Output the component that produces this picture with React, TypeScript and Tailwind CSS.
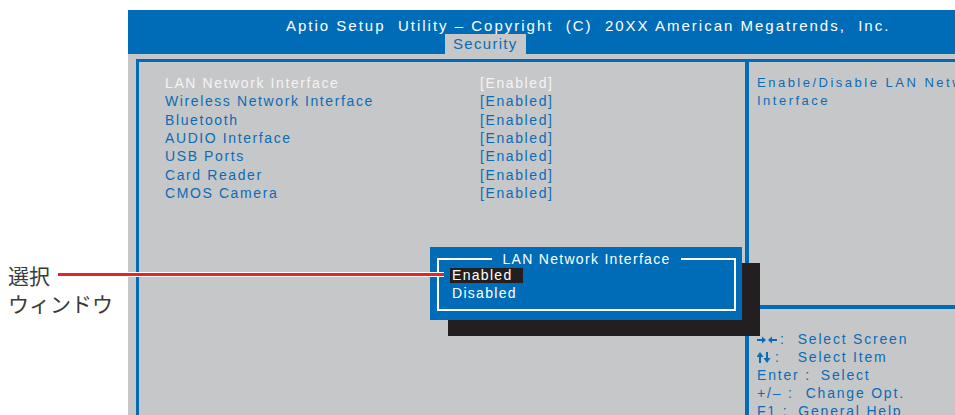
const BLUE = "bg-[#006cb7]";

const items = [
  "LAN Network Interface",
  "Wireless Network Interface",
  "Bluetooth",
  "AUDIO Interface",
  "USB Ports",
  "Card Reader",
  "CMOS Camera",
];

function LeftRight() {
  return (
    <svg width="20" height="8" viewBox="0 0 20 8" className="fill-current">
      <rect x="0" y="3" width="6" height="2" />
      <polygon points="5,0.5 9,4 5,7.5" />
      <rect x="14" y="3" width="6" height="2" />
      <polygon points="15,0.5 11,4 15,7.5" />
    </svg>
  );
}

function UpDown() {
  return (
    <svg width="14" height="11" viewBox="0 0 14 11" className="fill-current">
      <rect x="2" y="4" width="2" height="7" />
      <polygon points="-0.5,5 3,0 6.5,5" />
      <rect x="9" y="0" width="2" height="7" />
      <polygon points="6.5,6 10,11 13.5,6" />
    </svg>
  );
}

function HelpLine({ keyText, label, gap }: { keyText: React.ReactNode; label: string; gap: string }) {
  return (
    <div className="flex items-center h-[17.8px] whitespace-nowrap">
      <span className="flex items-center">{keyText}</span>
      <span className={gap}>{label}</span>
    </div>
  );
}

export default function App() {
  return (
    <div
      className="relative w-[955px] h-[415px] overflow-hidden bg-white flex"
      style={{ fontFamily: '"Liberation Sans", Arial, sans-serif' }}
    >
      {/* annotation labels */}
      <div
        className="w-[128px] shrink-0 pt-[261px] pl-[8px] text-[21px] leading-[28px] text-[#3a3a3a]"
        style={{ fontFamily: '"Noto Sans CJK JP", "Noto Sans", sans-serif' }}
      >
        <div>選択</div>
        <div>ウィンドウ</div>
      </div>

      {/* bios screen */}
      <div className="flex-1 flex flex-col pt-[10px]">
        <div className={`h-[45px] ${BLUE} flex flex-col text-white`}>
          <div className="pl-[158px] pt-[7px] text-[15px] leading-[17px] tracking-[2px] whitespace-pre">
            Aptio Setup  Utility – Copyright  (C)  20XX American Megatrends,  Inc.
          </div>
          <div className="mt-auto ml-[317px] w-[81px] h-[20px] bg-[#c6c7c9] text-[#0b6cb5] text-[15px] leading-[20px] tracking-[1.3px] pl-[8px]">
            Security
          </div>
        </div>

        <div className="flex-1 bg-[#c6c7c9] pt-[5px] pl-[8px] flex">
          <div className="flex-1 flex border-t-[3px] border-l-[3px] border-[#006cb7]">
            {/* main list */}
            <div className="w-[606px] shrink-0 pt-[12px] pl-[26px] text-[14px] leading-[18.33px] tracking-[1.6px]">
              {items.map((it, i) => (
                <div key={it} className={`flex ${i === 0 ? "text-[#f4f4f4]" : "text-[#0b6cb5]"}`}>
                  <span className="w-[315px]">{it}</span>
                  <span>[Enabled]</span>
                </div>
              ))}
            </div>
            <div className={`w-[4px] ${BLUE}`} />

            {/* help panel */}
            <div className="flex-1 flex flex-col text-[#0b6cb5]">
              <div className="h-[243px] pt-[12px] pl-[8px] text-[13px] leading-[18px] tracking-[2.5px] whitespace-nowrap">
                <div>Enable/Disable LAN Network</div>
                <div>Interface</div>
              </div>
              <div className={`h-[4px] ${BLUE}`} />
              <div className="pt-[22px] pl-[8px] text-[14px] tracking-[1.8px]">
                <HelpLine
                  keyText={<><LeftRight /><span className="ml-[3px]">:</span></>}
                  label="Select Screen"
                  gap="ml-[12px]"
                />
                <HelpLine
                  keyText={<><UpDown /><span className="ml-[4px]">:</span></>}
                  label="Select Item"
                  gap="ml-[17px]"
                />
                <HelpLine keyText="Enter :" label="Select" gap="ml-[10px]" />
                <HelpLine keyText="+/– :" label="Change Opt." gap="ml-[12px]" />
                <HelpLine keyText="F1 :" label="General  Help" gap="ml-[10px]" />
              </div>
            </div>
          </div>
        </div>
      </div>

      {/* popup shadow */}
      <div className="absolute left-[448px] top-[263px] w-[312px] h-[73px] bg-[#231f20]" />

      {/* popup window */}
      <div className={`absolute left-[430px] top-[247px] w-[312px] h-[73px] ${BLUE} pl-[7px] pt-[11px] pr-[6px] pb-[9px] flex`}>
        <div className="relative flex-1 border-2 border-white pt-[8px] pl-[11px] text-white text-[14px] leading-[18.5px] tracking-[1.3px]">
          <div className="absolute left-0 right-0 -top-[10px] flex justify-center">
            <span className={`${BLUE} px-[10px] leading-[18px]`}>LAN Network Interface</span>
          </div>
          <div className="w-[73px] h-[15px] bg-[#231f20] pl-[2px] leading-[15px]">Enabled</div>
          <div className="pl-[2px] mt-[1px]">Disabled</div>
        </div>
      </div>

      {/* callout line */}
      <div className="absolute left-[58px] top-[272px] w-[386px] h-[5px] bg-white py-[1px]">
        <div className="h-[3px] bg-[#e3242b]" />
      </div>
    </div>
  );
}
